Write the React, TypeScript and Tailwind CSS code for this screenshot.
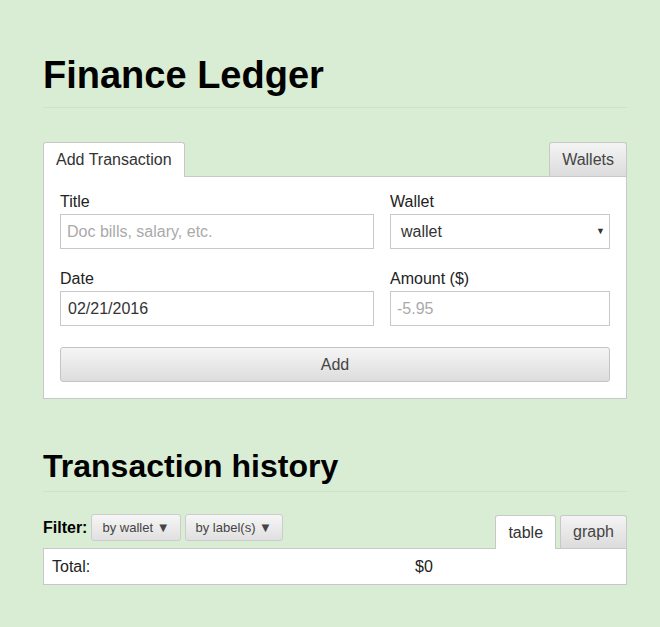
import React from 'react';

const font = { fontFamily: '"Liberation Sans", Arial, sans-serif' };

function Field({ label, children }: { label: string; children: React.ReactNode }) {
  return (
    <div className="flex flex-col">
      <label className="text-[16px] leading-[18px] text-[#222] mb-[3px]">{label}</label>
      {children}
    </div>
  );
}

export default function App() {
  return (
    <div className="min-h-[627px] bg-[#d9edd4] text-[#222]" style={font}>
      <div className="w-[584px] ml-[43px] pt-[53px]">
        <h1 className="text-[38px] font-bold leading-[44px] text-black pb-[10px] border-b border-[#cfe3ca]">
          Finance Ledger
        </h1>

        <div className="mt-[34px]">
          <div className="relative z-10 -mb-px flex justify-between items-end">
            <div className="h-[35px] px-[12px] flex items-center bg-white border border-b-0 border-[#c8c8c8] rounded-t-[3px] text-[16px] text-[#333]">
              Add Transaction
            </div>
            <div className="h-[34px] mb-px px-[12px] flex items-center bg-gradient-to-b from-[#f4f4f4] to-[#dcdcdc] border border-b-0 border-[#c8c8c8] rounded-t-[3px] text-[16px] text-[#444]">
              Wallets
            </div>
          </div>
          <div className="bg-white border border-[#c8c8c8] px-[16px] pt-[16px] pb-[16px]">
            <div className="grid grid-cols-[314px_220px] gap-x-[16px] gap-y-[21px]">
              <Field label="Title">
                <input
                  className="h-[35px] border border-[#c8c8c8] px-[6px] text-[16px] outline-none placeholder:text-[#aaa]"
                  placeholder="Doc bills, salary, etc."
                  style={font}
                />
              </Field>
              <Field label="Wallet">
                <div className="h-[35px] border border-[#c8c8c8] pl-[10px] pr-[4px] flex items-center justify-between text-[16px] text-[#333]">
                  <span>wallet</span>
                  <span className="text-[9px] text-[#333]">▼</span>
                </div>
              </Field>
              <Field label="Date">
                <input
                  className="h-[35px] border border-[#c8c8c8] px-[7px] text-[16px] text-[#333] outline-none"
                  defaultValue="02/21/2016"
                  style={font}
                />
              </Field>
              <Field label="Amount ($)">
                <input
                  className="h-[35px] border border-[#c8c8c8] px-[6px] text-[16px] outline-none placeholder:text-[#aaa]"
                  placeholder="-5.95"
                  style={font}
                />
              </Field>
            </div>
            <button
              className="mt-[21px] w-full h-[35px] rounded-[3px] border border-[#c4c4c4] bg-gradient-to-b from-[#f5f5f5] to-[#dddddd] text-[16px] text-[#444]"
              style={font}
            >
              Add
            </button>
          </div>
        </div>

        <h2 className="mt-[49px] text-[32px] font-bold leading-[36px] text-black pb-[7px] border-b border-[#cfe3ca]">
          Transaction history
        </h2>

        <div className="mt-[22px] relative z-10 -mb-px flex items-end justify-between">
          <div className="flex items-center gap-[4px] pb-[8px]">
            <span className="text-[16px] font-bold text-black">Filter:</span>
            <button className="h-[27px] px-[10px] rounded-[3px] border border-[#ccc] bg-gradient-to-b from-[#f6f6f6] to-[#e0e0e0] text-[13px] text-[#444]" style={font}>
              by wallet ▼
            </button>
            <button className="h-[27px] px-[10px] rounded-[3px] border border-[#ccc] bg-gradient-to-b from-[#f6f6f6] to-[#e0e0e0] text-[13px] text-[#444]" style={font}>
              by label(s) ▼
            </button>
          </div>
          <div className="flex items-end gap-[4px]">
            <div className="h-[34px] px-[12px] flex items-center bg-white border border-b-0 border-[#c8c8c8] rounded-t-[3px] text-[16px] text-[#333]">
              table
            </div>
            <div className="h-[33px] mb-px px-[12px] flex items-center bg-gradient-to-b from-[#f4f4f4] to-[#dcdcdc] border border-b-0 border-[#c8c8c8] rounded-t-[3px] text-[16px] text-[#444]">
              graph
            </div>
          </div>
        </div>
        <div className="bg-white border border-[#c8c8c8] h-[37px] flex items-center text-[16px] text-[#222]">
          <span className="pl-[8px] w-[371px]">Total:</span>
          <span>$0</span>
        </div>
      </div>
    </div>
  );
}
